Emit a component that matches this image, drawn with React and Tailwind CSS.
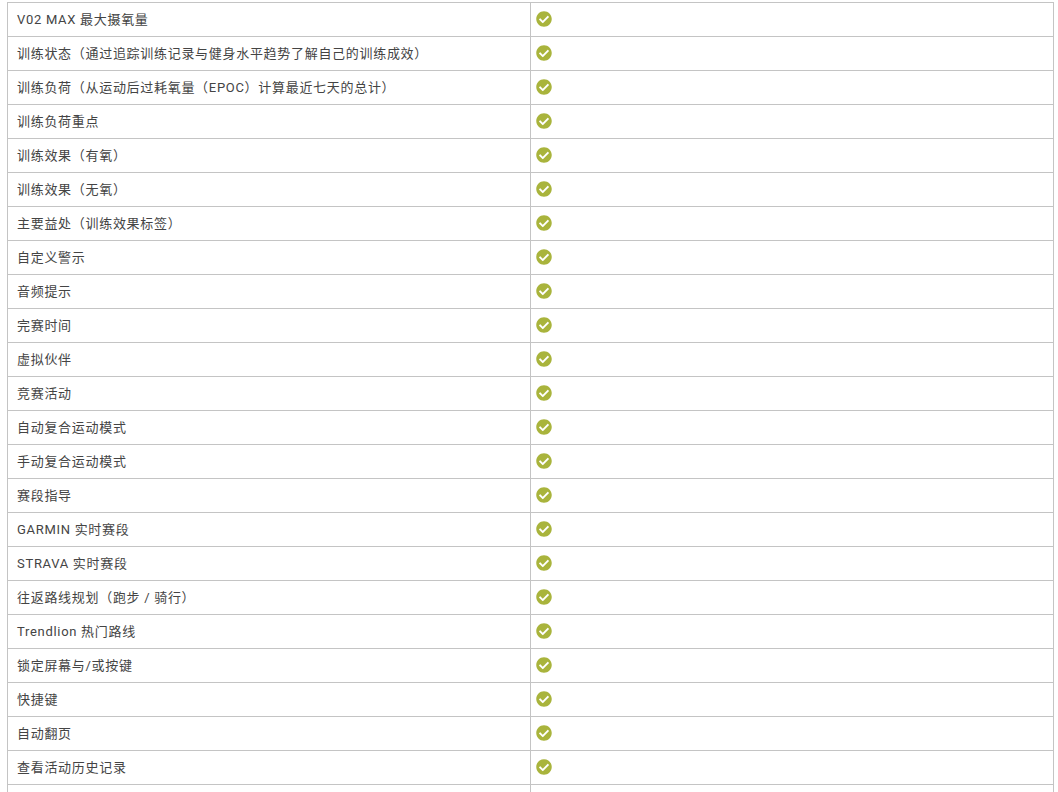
import { FaCheckCircle } from 'react-icons/fa';

const features = [
  'V02 MAX 最大摄氧量',
  '训练状态（通过追踪训练记录与健身水平趋势了解自己的训练成效）',
  '训练负荷（从运动后过耗氧量（EPOC）计算最近七天的总计）',
  '训练负荷重点',
  '训练效果（有氧）',
  '训练效果（无氧）',
  '主要益处（训练效果标签）',
  '自定义警示',
  '音频提示',
  '完赛时间',
  '虚拟伙伴',
  '竞赛活动',
  '自动复合运动模式',
  '手动复合运动模式',
  '赛段指导',
  'GARMIN 实时赛段',
  'STRAVA 实时赛段',
  '往返路线规划（跑步 / 骑行）',
  'Trendlion 热门路线',
  '锁定屏幕与/或按键',
  '快捷键',
  '自动翻页',
  '查看活动历史记录',
];

const App = () => {
  return (
    <div className="h-[792px] overflow-hidden bg-white pt-[2px] pl-[7px] pr-[4px] font-['Roboto','Noto_Sans_CJK_SC',sans-serif] text-[13px] tracking-[0.7px] text-[#444444]">
      <div className="border-l border-r border-b border-[#c4c4c4]">
        {features.map((name) => (
          <div key={name} className="flex h-[34px] border-t border-[#c4c4c4]">
            <div className="flex w-[522px] items-center pl-[9px]">{name}</div>
            <div className="flex flex-1 items-center border-l border-[#c4c4c4] pb-[1px] pl-[5px]">
              <FaCheckCircle className="h-4 w-4 text-[#a9b43c]" />
            </div>
          </div>
        ))}
        <div className="flex h-[34px] border-t border-[#c4c4c4]">
          <div className="w-[522px]" />
          <div className="flex-1 border-l border-[#c4c4c4]" />
        </div>
      </div>
    </div>
  );
};

export default App;
